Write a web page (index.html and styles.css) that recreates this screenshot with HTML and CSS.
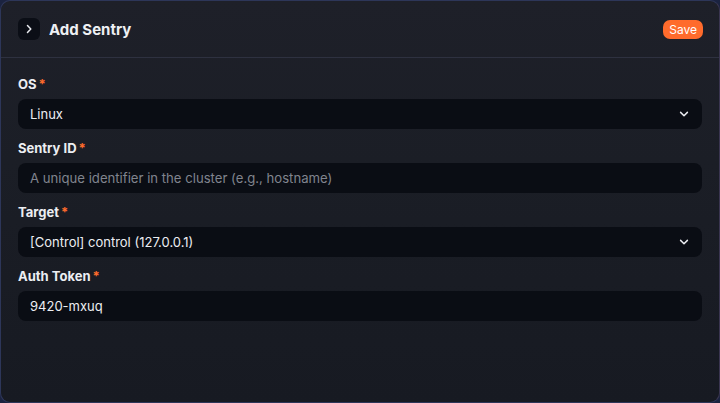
FILE: index.html
```html
<!DOCTYPE html>
<html>
<head>
<meta charset="utf-8">
<link rel="stylesheet" href="styles.css">
</head>
<body>
<div class="panel">
  <div class="header">
    <div class="title-group">
      <div class="icon-btn">
        <svg width="10" height="10" viewBox="0 0 10 10"><path d="M3.5 1.6 L6.8 5 L3.5 8.4" fill="none" stroke="#e8eaef" stroke-width="1.5" stroke-linecap="round" stroke-linejoin="round"/></svg>
      </div>
      <h1 class="title">Add Sentry</h1>
    </div>
    <button class="save">Save</button>
  </div>
  <div class="form">
    <div class="field">
      <label class="label">OS<span class="req">*</span></label>
      <div class="input select"><span>Linux</span>
        <svg width="10" height="10" viewBox="0 0 10 10"><path d="M1.6 3.4 L5 6.8 L8.4 3.4" fill="none" stroke="#e8eaef" stroke-width="1.5" stroke-linecap="round" stroke-linejoin="round"/></svg>
      </div>
    </div>
    <div class="field">
      <label class="label">Sentry ID<span class="req">*</span></label>
      <div class="input placeholder"><span>A unique identifier in the cluster (e.g., hostname)</span></div>
    </div>
    <div class="field">
      <label class="label">Target<span class="req">*</span></label>
      <div class="input select"><span>[Control] control (127.0.0.1)</span>
        <svg width="10" height="10" viewBox="0 0 10 10"><path d="M1.6 3.4 L5 6.8 L8.4 3.4" fill="none" stroke="#e8eaef" stroke-width="1.5" stroke-linecap="round" stroke-linejoin="round"/></svg>
      </div>
    </div>
    <div class="field">
      <label class="label">Auth Token<span class="req">*</span></label>
      <div class="input"><span>9420-mxuq</span></div>
    </div>
  </div>
</div>
</body>
</html>
```
FILE: styles.css
```css
* { box-sizing: border-box; }
html, body { margin: 0; height: 100%; }
body {
  background: #1b2340;
  font-family: Inter, "Noto Sans", sans-serif;
  color: #eceef2;
}
.panel {
  height: 403px;
  width: 720px;
  border: 1px solid #2d3659;
  border-right-color: #3a3550;
  border-radius: 10px;
  background: linear-gradient(180deg, #1e2029 0%, #1b1e26 40%, #171a22 100%);
  overflow: hidden;
}
.header {
  height: 57px;
  display: flex;
  align-items: center;
  justify-content: space-between;
  padding: 0 16px 0 17px;
  border-bottom: 1px solid #2e3140;
}
.title-group { display: flex; align-items: center; gap: 9px; }
.icon-btn {
  width: 22px; height: 22px;
  border-radius: 6px;
  background: #0b0e16;
  display: flex; align-items: center; justify-content: center;
}
.title {
  margin: 0;
  font-size: 15px;
  font-weight: 700;
  color: #eef0f3;
}
.save {
  border: none;
  background: #ff6b2c;
  color: #fff;
  font-family: inherit;
  font-size: 12px;
  height: 19px;
  padding: 0 6px;
  border-radius: 7px;
  line-height: 19px;
  margin-top: 1px;
}
.form {
  padding: 17px 17px 0 17px;
  display: flex;
  flex-direction: column;
  gap: 10px;
}
.field { display: flex; flex-direction: column; gap: 6px; }
.label {
  font-size: 13px;
  font-weight: 700;
  line-height: 18px;
  color: #eceef2;
}
.req { color: #ff6b2c; margin-left: 2px; }
.input {
  height: 30px;
  border-radius: 8px;
  background: #0a0d14;
  display: flex;
  align-items: center;
  justify-content: space-between;
  padding: 0 12px 0 12px;
  font-size: 13px;
  color: #eceef2;
}
.input.placeholder { color: #80848e; font-size: 13.15px; }
.input.select svg { margin-right: 1px; }
```
